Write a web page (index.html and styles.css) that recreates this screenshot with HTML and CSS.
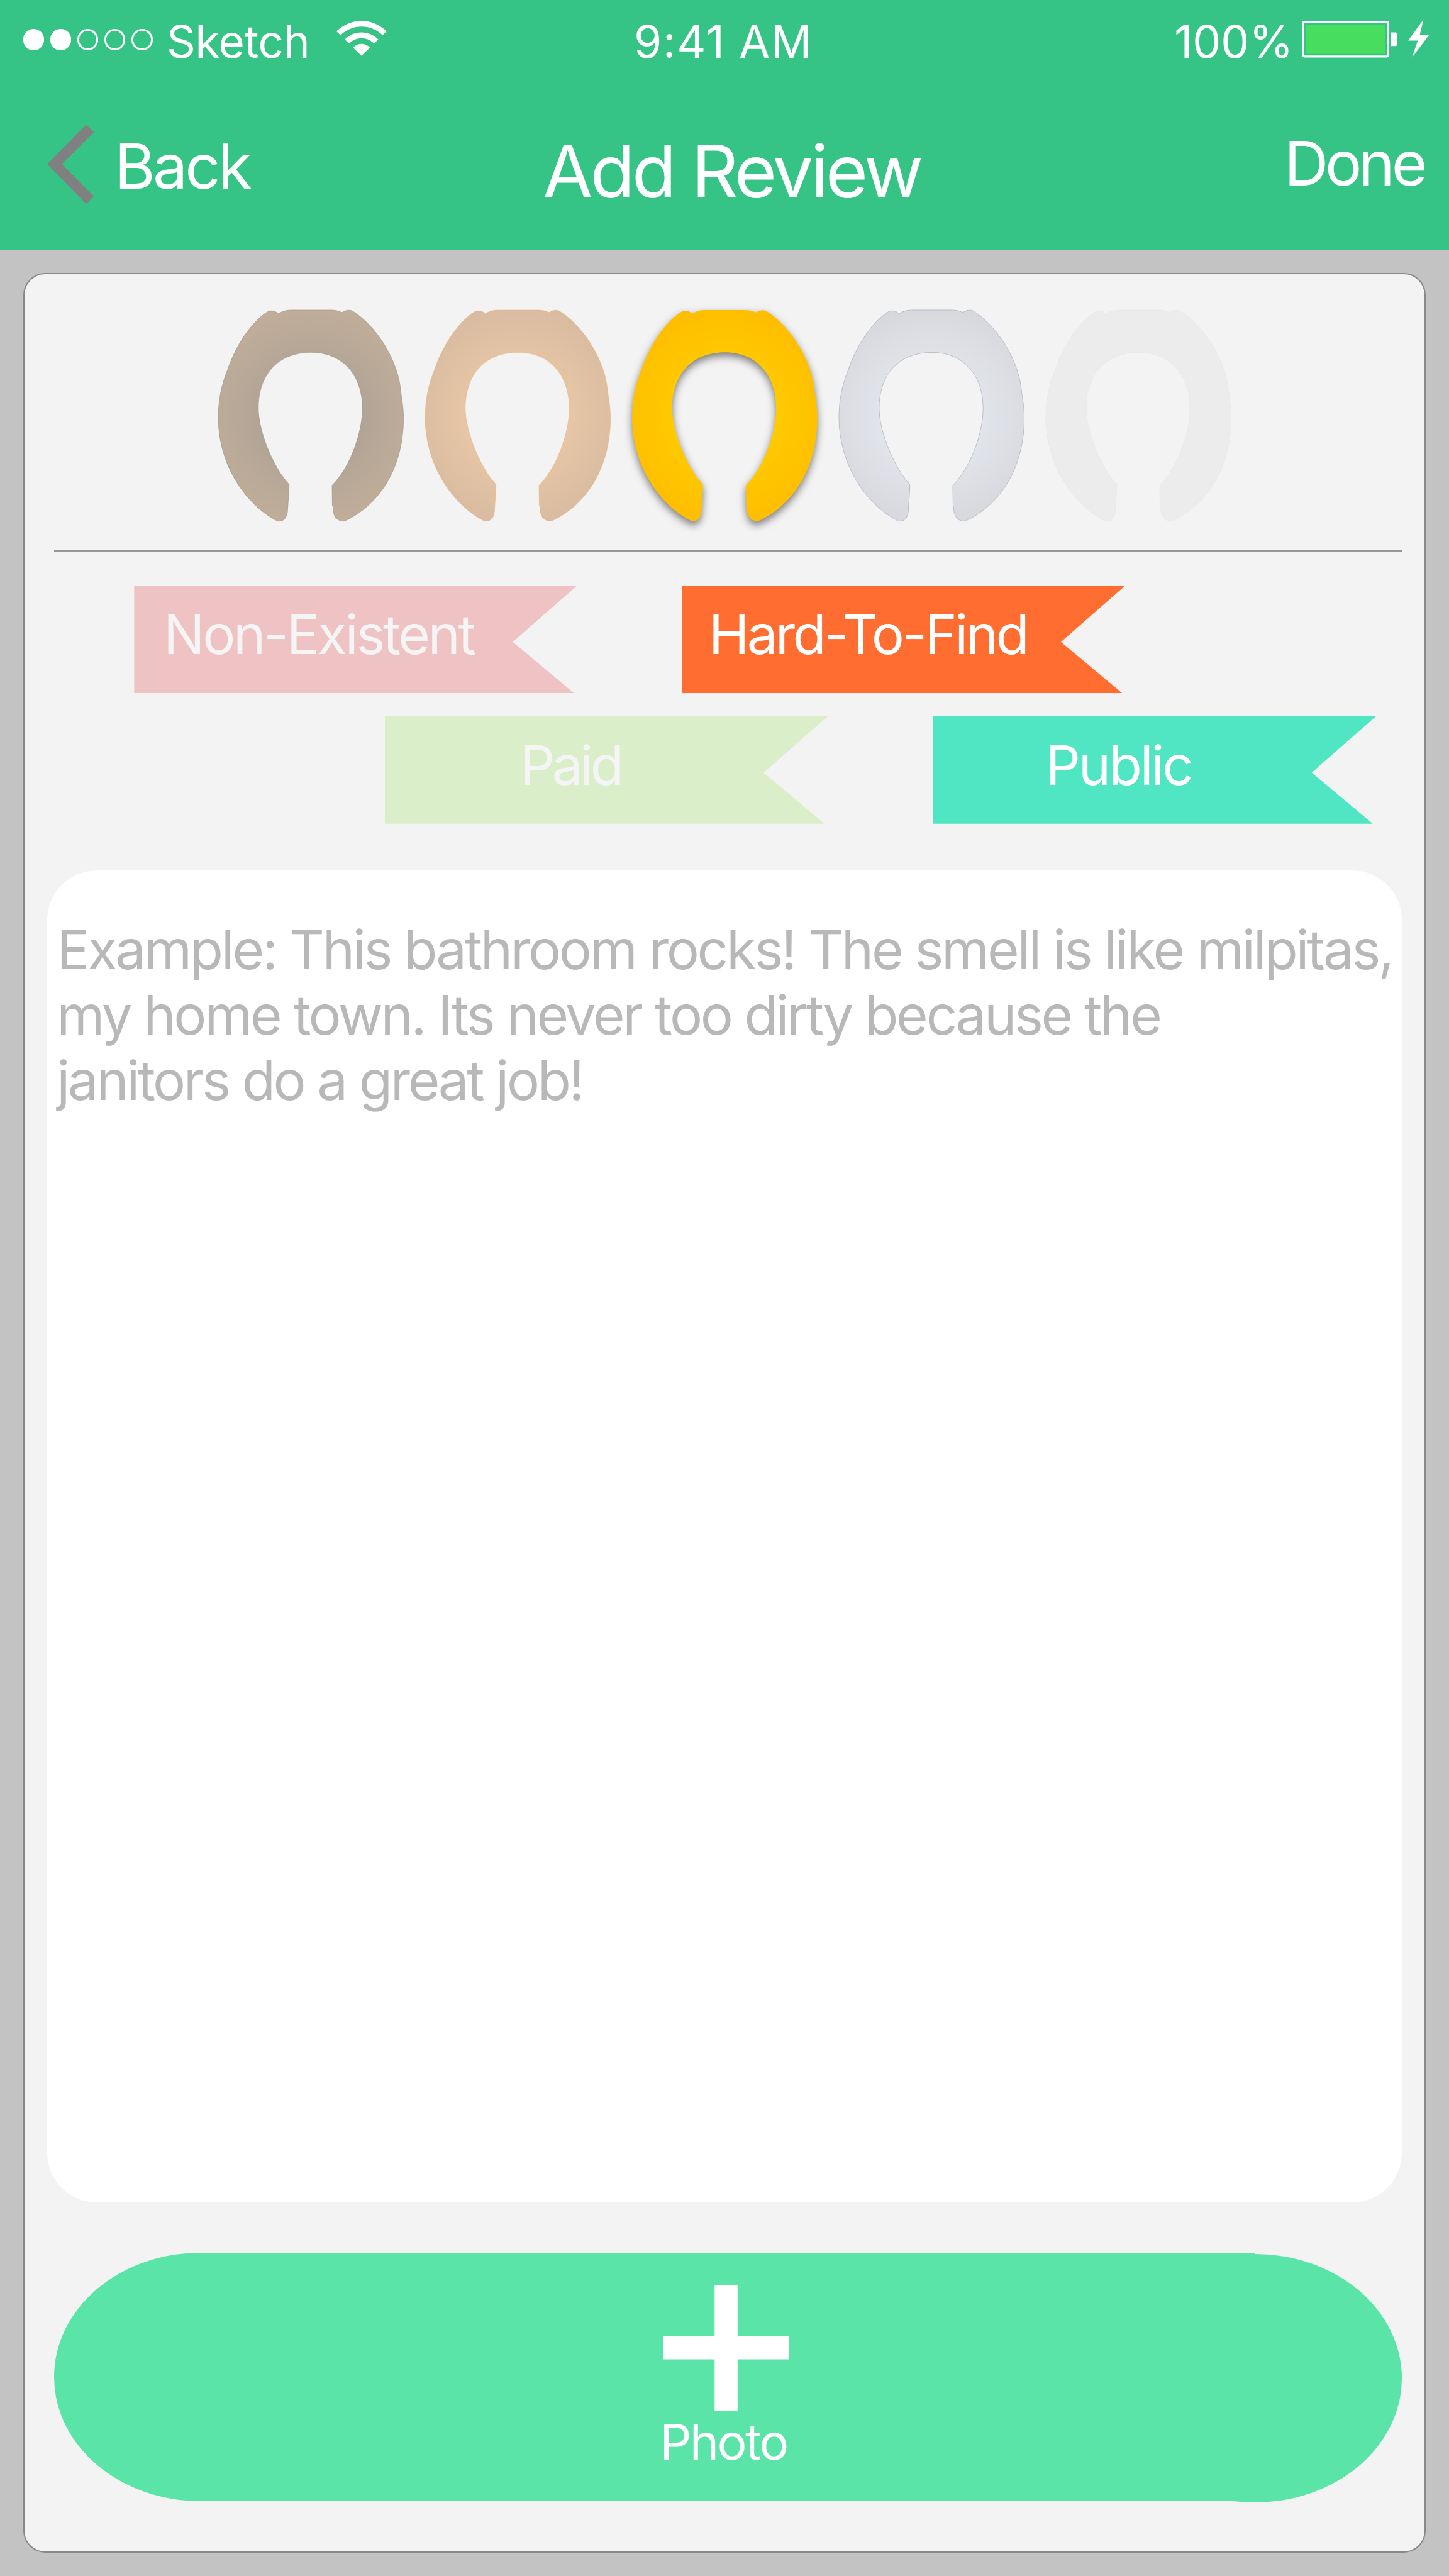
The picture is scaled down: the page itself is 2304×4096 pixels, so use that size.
FILE: index.html
```html
<!DOCTYPE html>
<html lang="en">
<head>
<meta charset="utf-8">
<title>Add Review</title>
<link rel="stylesheet" href="styles.css">
</head>
<body>
<svg class="defs" aria-hidden="true">
  <defs>
    <radialGradient id="brown" gradientUnits="userSpaceOnUse" cx="238" cy="272" r="300"><stop offset=".38" stop-color="#b0a395"/><stop offset="1" stop-color="#c2af9a"/></radialGradient>
    <radialGradient id="bronze" gradientUnits="userSpaceOnUse" cx="238" cy="272" r="300"><stop offset=".42" stop-color="#e8c6a6"/><stop offset="1" stop-color="#d6baa0"/></radialGradient>
    <radialGradient id="gold" gradientUnits="userSpaceOnUse" cx="238" cy="272" r="300"><stop offset=".4" stop-color="#ffcb00"/><stop offset="1" stop-color="#ffbc00"/></radialGradient>
    <radialGradient id="silver" gradientUnits="userSpaceOnUse" cx="238" cy="272" r="300"><stop offset=".4" stop-color="#e2e5eb"/><stop offset="1" stop-color="#d6d7dc"/></radialGradient>
    <path id="seat" d="M154.6 9.4C165.3 3.1 174.9 0 186.4 0H289.7C301.2 0 310.7 2.2 318.8 6.2C326.8 0 337.5 -1.3 344.4 1.8C410.2 42 463 133.9 469.2 205.3C470.7 222 476.5 244 476.5 279C476.5 401.8 418 500 324.9 542.8C305 543.3 295 531.2 295 505.8L293.5 503.5L292.8 450.9C341.4 401.8 370.8 312.5 370.8 252.2C370.8 169.6 322.2 108.9 239.2 108.9C150 108.9 103.3 169.6 103.3 252.2C103.3 312.5 142.4 406.2 182.2 448.2V459.8L178.7 511.1C178.7 533.4 169.1 544.6 152.7 542.8C66 499 0 392.8 0 276.8C0 232.1 8.4 192 23 156.2C45 91 84 33 123.2 6.7C132.8 0 144.3 0 154.6 9.4Z"/>
  </defs>
</svg>

<header class="header">
  <div class="status">
    <div class="status-left">
      <div class="signal"><i class="dot dot-on"></i><i class="dot dot-on"></i><i class="dot"></i><i class="dot"></i><i class="dot"></i></div>
      <span class="carrier">Sketch</span>
      <svg class="wifi" viewBox="1085 111 162 186" preserveAspectRatio="none" fill="#fff">
        <path d="M1085 167C1109 130 1138 111 1166 111S1223 130 1247 167L1234 188C1215 157 1190 142 1166 142S1117 157 1098 188Z"/>
        <path d="M1112 210C1127 186 1146 173 1166 173S1205 186 1220 210L1206 232C1195 213 1180 204 1166 204S1137 213 1126 232Z"/>
        <path d="M1139 254C1147 240 1156 234 1166 234S1185 240 1193 254L1166 297Z"/>
      </svg>
    </div>
    <span class="time">9:41 AM</span>
    <div class="status-right">
      <span class="percent">100%</span>
      <svg class="battery" viewBox="0 0 244.9 94.5">
        <rect x="2.6" y="2.6" width="219.7" height="89.3" rx="3.5" fill="none" stroke="#fff" stroke-width="5.2"/>
        <rect x="10.5" y="10.2" width="204.4" height="75" rx="1" fill="#47dd5e"/>
        <path d="M229.1 30.1H242.4L244.9 32.6V62.5L242.4 65H229.1Z" fill="#fff"/>
      </svg>
      <svg class="bolt" viewBox="0 0 54.3 97.9"><path fill="#fff" d="M39.5 0L30 39.3H54.3L10 97.9L24.8 54.3H0Z"/></svg>
    </div>
  </div>
  <nav class="nav">
    <div class="back">
      <svg class="chevron" viewBox="0 0 120.4 204"><path fill="#808080" d="M100.4 0L120.4 19.3L38 102L120.4 185L100.4 204L0 102Z"/></svg>
      <span class="back-label">Back</span>
    </div>
    <h1 class="title">Add Review</h1>
    <span class="done">Done</span>
  </nav>
</header>

<main class="main">
  <section class="card">
    <div class="seats">
      <svg class="seat" viewBox="0 0 476.5 545"><use href="#seat" fill="url(#brown)" stroke="#9d8f80"/></svg>
      <svg class="seat" viewBox="0 0 476.5 545"><use href="#seat" fill="url(#bronze)" stroke="#edb57f"/></svg>
      <svg class="seat seat-selected" viewBox="0 0 476.5 545"><use href="#seat" fill="url(#gold)"/></svg>
      <svg class="seat" viewBox="0 0 476.5 545"><use href="#seat" fill="url(#silver)" stroke="#b7bac3" stroke-width="1.5"/></svg>
      <svg class="seat" viewBox="0 0 476.5 545"><use href="#seat" fill="#ececec" stroke="#e5e5e5"/></svg>
    </div>
    <hr class="divider">
    <div class="tags tags-first">
      <span class="tag tag-missing">Non-Existent</span>
      <span class="tag tag-hard">Hard-To-Find</span>
    </div>
    <div class="tags tags-second">
      <span class="tag tag-paid">Paid</span>
      <span class="tag tag-public">Public</span>
    </div>
    <div class="comment">
      <span class="line line-one">Example: This bathroom rocks! The smell is like milpitas,</span>
      <span class="line line-two">my home town. Its never too dirty because the</span>
      <span class="line line-three">janitors do a great job!</span>
    </div>
    <div class="photo">
      <svg class="plus" viewBox="0 0 199 199"><path fill="#fff" d="M81.3 0H117.8V81.1H199V117.6H117.8V199H81.3V117.6H0V81.1H81.3Z"/></svg>
      <span class="photo-label">Photo</span>
    </div>
  </section>
</main>
</body>
</html>
```
FILE: styles.css
```css
* { box-sizing: border-box; }

body {
  margin: 0;
  width: 2304px;
  height: 4096px;
  background: #c3c3c3;
  color: #fff;
  font-family: Inter, "Liberation Sans", sans-serif;
  white-space: nowrap;
}

svg { display: block; flex: none; overflow: visible; }
.defs { position: absolute; width: 0; height: 0; }

/* Header */
.header { height: 397px; background: #35c485; }

.status {
  display: grid;
  grid-template-columns: 1008px 1fr auto;
  align-items: center;
  height: 132px;
  padding-right: 31px;
  font-size: 71.5px;
  line-height: 132px;
}
.status-left, .status-right { display: flex; align-items: center; }
.status-left { padding-left: 36.5px; }
.signal { display: flex; gap: 9.4px; margin-bottom: 6.4px; }
.dot { width: 33.7px; height: 33.7px; border: 3px solid #fff; border-radius: 50%; }
.dot-on { background: #fff; }
.carrier { margin-left: 22.6px; letter-spacing: -0.67px; }
.wifi { width: 79.8px; height: 55.7px; margin: 0 0 9.6px 43px; }
.time { letter-spacing: 1.64px; }
.percent { letter-spacing: -0.06px; }
.battery { width: 151.4px; height: 58.4px; margin: 0 18.2px 7px 13.4px; }
.bolt { width: 33.6px; height: 60.5px; margin-bottom: 9.6px; }

.nav {
  display: grid;
  grid-template-columns: 863px 1fr auto;
  align-items: center;
  height: 265px;
  padding-right: 39.7px;
}
.back { display: flex; align-items: center; padding-left: 74.5px; }
.chevron { width: 74.4px; height: 126.1px; margin-bottom: 6px; }
.back-label { margin-left: 33.4px; font-size: 98.5px; letter-spacing: -3.84px; }
.title { margin: 14px 0 0; font-size: 115.7px; font-weight: 400; letter-spacing: -4.4px; }
.done { margin-bottom: 10px; font-size: 97.5px; letter-spacing: -5.24px; }

/* Card */
.main { padding: 37px; }
.card {
  height: 3625px;
  border: 2px solid #8b8788;
  border-radius: 35px;
  background: #f3f3f3;
}

.seats { display: flex; gap: 34.5px; padding: 57.4px 0 0 307.7px; }
.seat { width: 294.6px; height: 337px; }
.seat-selected { filter: drop-shadow(0 6.2px 6.2px rgba(0, 0, 0, 0.5)); }

.divider { width: 2143px; height: 2px; margin: 44.6px 0 54px 47px; border: 0; background: #979797; }

.tags { display: flex; gap: 167.1px; }
.tags-first { padding-left: 174.3px; }
.tags-second { padding-left: 573px; margin-top: 36.9px; }
.tag {
  width: 704.5px;
  height: 170.9px;
  font-size: 87px;
  line-height: 156px;
  clip-path: polygon(0 0, 100% 0, 85.47% 52.5%, 99.25% 100%, 0 100%);
}
.tag-missing { padding-left: 46.8px; background: #efc2c4; color: #f5f5f5; letter-spacing: -3.38px; }
.tag-hard { padding-left: 41.8px; background: #ff6d31; letter-spacing: -3.67px; }
.tag-paid { padding-left: 214.8px; background: #dbeeca; color: #f5f5f5; letter-spacing: -4.5px; }
.tag-public { padding-left: 178.8px; background: #50e5c3; letter-spacing: -3.32px; }

.comment {
  width: 2154.4px;
  height: 2118.6px;
  margin: 74px 0 0 35.6px;
  padding: 74px 0 0 15.6px;
  border-radius: 79px;
  background: #fff;
  color: #b8b8b8;
  font-size: 87px;
  line-height: 104px;
}
.line { display: block; }
.line-one { letter-spacing: -3.31px; }
.line-two { letter-spacing: -3.39px; }
.line-three { letter-spacing: -3.42px; }

/* Photo button: a left-rounded bar whose right end is a separate ellipse */
.photo {
  position: relative;
  isolation: isolate;
  display: flex;
  flex-direction: column;
  align-items: center;
  width: 2143.2px;
  height: 394.6px;
  margin: 79.9px 0 0 47.1px;
  padding: 51.7px 6.3px 0 0;
}
.photo::before, .photo::after {
  content: "";
  position: absolute;
  z-index: -1;
  background: #5be4a8;
}
.photo::before { inset: 0 233.8px 0 0; border-radius: 232.5px 0 0 232.5px / 197.3px 0 0 197.3px; }
.photo::after { top: 1.6px; right: 0; width: 467.6px; height: 395.4px; border-radius: 50%; }
.plus { width: 199px; height: 199px; }
.photo-label { margin-right: 8px; font-size: 78.6px; line-height: 99px; letter-spacing: -2.68px; }
```
